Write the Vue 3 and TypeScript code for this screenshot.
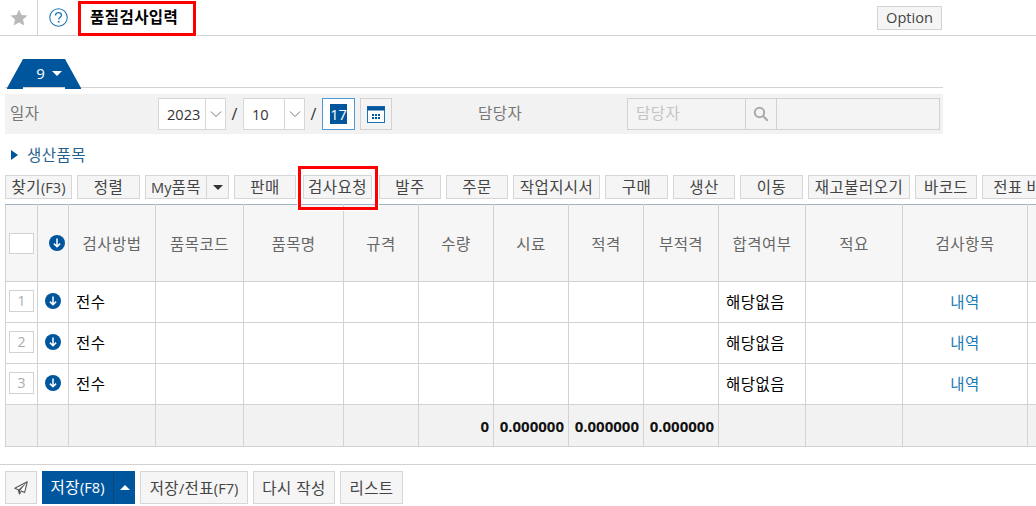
<script setup lang="ts">
interface Tool { label: string; width: number; flagged?: boolean; caret?: boolean }

const tools: Tool[] = [
  { label: '찾기(F3)', width: 67 },
  { label: '정렬', width: 63 },
  { label: 'My품목', width: 84, caret: true },
  { label: '판매', width: 62 },
  { label: '검사요청', width: 69, flagged: true },
  { label: '발주', width: 62 },
  { label: '주문', width: 62 },
  { label: '작업지시서', width: 87 },
  { label: '구매', width: 63 },
  { label: '생산', width: 62 },
  { label: '이동', width: 63 },
  { label: '재고불러오기', width: 102 },
  { label: '바코드', width: 62 },
  { label: '전표 바코드', width: 100 },
]

const columns = [
  { label: '', width: 32 },
  { label: '', width: 31 },
  { label: '검사방법', width: 87 },
  { label: '품목코드', width: 88 },
  { label: '품목명', width: 100 },
  { label: '규격', width: 75 },
  { label: '수량', width: 75 },
  { label: '시료', width: 75 },
  { label: '적격', width: 75 },
  { label: '부적격', width: 75 },
  { label: '합격여부', width: 87 },
  { label: '적요', width: 97 },
  { label: '검사항목', width: 125 },
  { label: '', width: 60 },
]

const rows = [1, 2, 3]

function runs(text: string): { text: string; latin: boolean }[] {
  return text
    .split(/([\x20-\x7e]+)/)
    .filter((part) => part.length > 0)
    .map((part) => ({ text: part, latin: /^[\x20-\x7e]+$/.test(part) }))
}
</script>

<template>
  <div class="page">
    <svg width="0" height="0" class="defs" aria-hidden="true">
      <symbol id="down" viewBox="0 0 16 16">
        <circle cx="8" cy="8" r="8" fill="#00569c" />
        <path d="M8 3.6V11.6M4.9 8.6L8 11.7L11.1 8.6" fill="none" stroke="#fff" stroke-width="1.5" />
      </symbol>
      <symbol id="chev" viewBox="0 0 12 8">
        <path d="M1 1.5L6 6.5L11 1.5" fill="none" stroke="#777" stroke-width="1" />
      </symbol>
    </svg>

    <header class="topbar">
      <div class="star-cell">
        <svg width="18" height="17" viewBox="0 0 18 17">
          <path d="M9 0.5L11.5 6L17.5 6.6L13 10.6L14.3 16.5L9 13.4L3.7 16.5L5 10.6L0.5 6.6L6.5 6Z" fill="#b9b9b9" />
        </svg>
      </div>
      <div class="help-cell">
        <svg width="19" height="19" viewBox="0 0 18 18">
          <circle cx="9" cy="9" r="8.3" fill="none" stroke="#1c75b8" stroke-width="1" />
          <path d="M6.2 7C6.2 5.3 7.4 4.4 9 4.4C10.7 4.4 11.8 5.4 11.8 6.8C11.8 8.7 9.2 8.9 9.2 11" fill="none" stroke="#1c75b8" stroke-width="1.2" />
          <rect x="8.4" y="12.2" width="1.6" height="1.6" fill="#1c75b8" />
        </svg>
      </div>
      <h1 class="title">품질검사입력</h1>
      <button class="option" type="button">Option</button>
    </header>

    <div class="tabs">
      <div class="tab"><span class="tab-num">9</span><i class="caret-down"></i></div>
    </div>

    <div class="filters">
      <span class="f-label date-label">일자</span>
      <div class="select year">
        <span class="select-val">2023</span>
        <span class="select-arrow"><svg width="12" height="8"><use href="#chev" /></svg></span>
      </div>
      <span class="slash">/</span>
      <div class="select month">
        <span class="select-val">10</span>
        <span class="select-arrow"><svg width="12" height="8"><use href="#chev" /></svg></span>
      </div>
      <span class="slash">/</span>
      <div class="day"><span class="day-sel">17</span></div>
      <button class="cal" type="button" aria-label="달력">
        <svg width="18" height="17" viewBox="0 0 18 17">
          <rect x="0.5" y="0.5" width="17" height="16" fill="#fff" stroke="#1c75b8" />
          <rect x="0.5" y="0.5" width="17" height="4" fill="#00569c" />
          <path d="M5 8h2v2H5zM8 8h2v2H8zM11 8h2v2h-2zM5 11h2v2H5zM8 11h2v2H8zM11 11h2v2h-2z" fill="#00569c" />
        </svg>
      </button>
      <span class="f-label owner-label">담당자</span>
      <div class="owner">
        <span class="owner-input">담당자</span>
        <span class="owner-search">
          <svg width="16" height="16" viewBox="0 0 16 16">
            <circle cx="6.5" cy="6.5" r="4.7" fill="none" stroke="#aaa" stroke-width="2" />
            <path d="M10 10L14.8 14.8" stroke="#aaa" stroke-width="2.2" />
          </svg>
        </span>
        <span class="owner-name"></span>
      </div>
    </div>

    <div class="section">
      <i class="tri"></i>
      <span>생산품목</span>
    </div>

    <div class="toolbar">
      <button
        v-for="t in tools"
        :key="t.label"
        class="tool"
        :class="{ flagged: t.flagged }"
        type="button"
        :style="{ width: t.width + 'px', flexBasis: t.width + 'px' }"
      >
        <span class="tool-text">
          <span v-for="(r, i) in runs(t.label)" :key="i" :class="{ lat: r.latin }">{{ r.text }}</span>
        </span>
        <span v-if="t.caret" class="tool-caret"><i class="caret-dark"></i></span>
        <span v-if="t.flagged" class="flag"></span>
      </button>
    </div>

    <table class="grid">
      <colgroup>
        <col v-for="(c, i) in columns" :key="i" :style="{ width: c.width + 'px' }" />
      </colgroup>
      <thead>
        <tr>
          <th><span class="check"></span></th>
          <th class="arrow-head"><svg width="16" height="16"><use href="#down" /></svg></th>
          <th v-for="c in columns.slice(2)" :key="c.label">{{ c.label }}</th>
        </tr>
      </thead>
      <tbody>
        <tr v-for="n in rows" :key="n">
          <td><span class="rownum">{{ n }}</span></td>
          <td class="arrow-cell"><svg width="16" height="16"><use href="#down" /></svg></td>
          <td class="left">전수</td>
          <td></td>
          <td></td>
          <td></td>
          <td></td>
          <td></td>
          <td></td>
          <td></td>
          <td class="left">해당없음</td>
          <td></td>
          <td class="link">내역</td>
          <td></td>
        </tr>
      </tbody>
      <tfoot>
        <tr>
          <td></td>
          <td></td>
          <td></td>
          <td></td>
          <td></td>
          <td></td>
          <td class="sum">0</td>
          <td class="sum">0.000000</td>
          <td class="sum">0.000000</td>
          <td class="sum">0.000000</td>
          <td></td>
          <td></td>
          <td></td>
          <td></td>
        </tr>
      </tfoot>
    </table>

    <footer class="actions">
      <button class="act send" type="button" aria-label="보내기">
        <svg width="14" height="14" viewBox="0 0 14 14">
          <path d="M13.3 0.7L0.8 7.2L4.3 8.7L5.4 12.9L7.4 10L10.6 11.6Z" fill="#fff" stroke="#555" stroke-width="1.1" stroke-linejoin="round" />
          <path d="M13.3 0.7L4.3 8.7L5.4 12.9L6.2 9.4Z" fill="#555" />
        </svg>
      </button>
      <div class="save">
        <span class="save-main">저장<span class="lat">(F8)</span></span>
        <span class="save-caret"><i class="caret-up"></i></span>
      </div>
      <button class="act w-108" type="button">저장<span class="lat">/</span>전표<span class="lat">(F7)</span></button>
      <button class="act w-82" type="button">다시 작성</button>
      <button class="act w-63" type="button">리스트</button>
    </footer>
  </div>
</template>

<style>
html,
body {
  margin: 0;
  overflow: hidden;
  background: #fff;
}
</style>

<style scoped>
.page {
  width: 1036px;
  height: 506px;
  overflow: hidden;
  font-family: "Open Sans", "Noto Sans CJK KR", sans-serif;
  font-size: 15.5px;
  letter-spacing: 0.45px;
  color: #444;
  background: #fff;
}
.defs {
  position: absolute;
}
.lat {
  font-size: 14.6px;
  letter-spacing: 0;
}
button {
  font: inherit;
  letter-spacing: inherit;
  color: inherit;
  padding: 0;
  margin: 0;
}

.topbar {
  display: flex;
  align-items: stretch;
  height: 35px;
  border-bottom: 1px solid #d2d2d2;
}
.star-cell {
  width: 37px;
  border-right: 1px solid #d2d2d2;
  display: flex;
  align-items: center;
  justify-content: center;
}
.help-cell {
  width: 40px;
  display: flex;
  align-items: center;
  justify-content: center;
}
.title {
  box-sizing: border-box;
  width: 118px;
  height: 35px;
  margin: 1px 0 0;
  border: 3px solid #f00;
  box-shadow: 0 0 0 1px #fff;
  background: #fff;
  position: relative;
  padding-left: 9px;
  font-size: 15.5px;
  font-weight: 700;
  line-height: 27px;
  color: #000;
  white-space: nowrap;
}
.option {
  box-sizing: border-box;
  margin: 6px 94px 0 auto;
  width: 65px;
  height: 24px;
  padding-bottom: 2px;
  border: 1px solid #d2d2d2;
  background: #f5f5f5;
  font-size: 14.6px;
  line-height: 20px;
  letter-spacing: 0;
  color: #444;
}

.tabs {
  margin: 0 93px 0 5px;
  padding-top: 23px;
  height: 28px;
  border-bottom: 1px solid #d2d2d2;
}
.tab {
  position: relative;
  margin-left: 2px;
  width: 74px;
  height: 30px;
  background: #00569c;
  clip-path: polygon(16px 0, 58px 0, 74px 29px, 74px 30px, 58px 30px, 58px 28px, 16px 28px, 16px 30px, 0 30px, 0 29px);
  display: flex;
  align-items: center;
  justify-content: center;
  gap: 7px;
  color: #fff;
  font-size: 15px;
  letter-spacing: 0;
  padding: 0 0 2px 10px;
  box-sizing: border-box;
}
.caret-down {
  width: 0;
  height: 0;
  border: 5px solid transparent;
  border-top: 5px solid #fff;
  border-bottom: 0;
}

.filters {
  box-sizing: border-box;
  display: flex;
  align-items: center;
  height: 40px;
  margin: 6px 93px 0 5px;
  background: #f2f2f2;
}
.f-label {
  color: #777;
  padding-bottom: 3px;
}
.date-label {
  width: 148px;
  padding-left: 5px;
}
.select {
  box-sizing: border-box;
  display: flex;
  height: 32px;
  border: 1px solid #d6d6d6;
  background: #fff;
  font-size: 14.6px;
  letter-spacing: 0;
  color: #333;
}
.year {
  width: 68px;
}
.month {
  width: 62px;
}
.select-val {
  flex: 1;
  line-height: 30px;
  padding-left: 8px;
}
.select-arrow {
  width: 19px;
  border-left: 1px solid #d6d6d6;
  display: flex;
  align-items: center;
  justify-content: center;
}
.slash {
  width: 17px;
  text-align: center;
  font-size: 16px;
  letter-spacing: 0;
  color: #333;
}
.day {
  box-sizing: border-box;
  width: 33px;
  height: 32px;
  border: 1px solid #4a9bd8;
  background: #fff;
  display: flex;
  align-items: center;
  justify-content: center;
}
.day-sel {
  background: #00569c;
  color: #fff;
  font-size: 14.6px;
  letter-spacing: 0;
  line-height: 20px;
  width: 17px;
  text-align: center;
}
.cal {
  box-sizing: border-box;
  width: 32px;
  height: 32px;
  margin-left: 5px;
  border: 1px solid #d2d2d2;
  background: #f4f4f4;
  display: flex;
  align-items: center;
  justify-content: center;
}
.owner-label {
  margin-left: 86px;
  width: 149px;
}
.owner {
  box-sizing: border-box;
  display: flex;
  width: 313px;
  height: 32px;
  border: 1px solid #d2d2d2;
  background: #f4f4f4;
}
.owner-input {
  width: 117px;
  line-height: 29px;
  padding-left: 8px;
  box-sizing: border-box;
  color: #c4c4c4;
}
.owner-search {
  box-sizing: border-box;
  width: 32px;
  border-left: 1px solid #d2d2d2;
  border-right: 1px solid #d2d2d2;
  display: flex;
  align-items: center;
  justify-content: center;
}
.owner-name {
  flex: 1;
}

.section {
  box-sizing: border-box;
  display: flex;
  align-items: center;
  height: 22px;
  margin-top: 10px;
  padding: 0 0 2px 11px;
  color: #25628f;
}
.tri {
  width: 0;
  height: 0;
  border-left: 7px solid #00569c;
  border-top: 5px solid transparent;
  border-bottom: 5px solid transparent;
  margin: 1px 9px 0 0;
}

.toolbar {
  display: flex;
  gap: 5px;
  margin: 9px 0 0 5px;
  height: 24px;
}
.tool {
  position: relative;
  box-sizing: border-box;
  flex-shrink: 0;
  flex-grow: 0;
  display: flex;
  height: 24px;
  border: 1px solid #d6d6d6;
  background: #f5f5f5;
  color: #444;
  white-space: nowrap;
}
.tool.flagged {
  margin: 0 2px;
}
.tool-text {
  flex: 1;
  line-height: 22px;
  text-align: center;
}
.tool-caret {
  width: 21px;
  border-left: 1px solid #d6d6d6;
  display: flex;
  align-items: center;
  justify-content: center;
}
.caret-dark {
  width: 0;
  height: 0;
  border: 5px solid transparent;
  border-top: 5px solid #333;
  border-bottom: 0;
}
.flag {
  position: absolute;
  left: -6px;
  right: -7px;
  top: -10px;
  bottom: -12px;
  border: 3px solid #f00;
  box-shadow: 0 0 0 1px #fff;
  z-index: 2;
}

.grid {
  table-layout: fixed;
  border-collapse: collapse;
  width: 1082px;
  margin: 5px 0 0 5px;
}
.grid th,
.grid td {
  border: 1px solid #d2d2d2;
  padding: 0;
  overflow: hidden;
  white-space: nowrap;
}
.grid th {
  height: 76px;
  background: #f6f6f6;
  border-top: 1px solid #9db2c6;
  font-weight: 400;
  text-align: center;
  color: #666;
  vertical-align: middle;
}
.grid tbody td {
  height: 38px;
  padding-bottom: 2px;
  color: #000;
}
.check {
  display: block;
  box-sizing: border-box;
  width: 25px;
  height: 21px;
  margin-left: 3px;
  border: 1px solid #d2d2d2;
  background: #fff;
}
.rownum {
  display: block;
  box-sizing: border-box;
  width: 25px;
  height: 22px;
  margin-left: 3px;
  border: 1px solid #d2d2d2;
  text-align: center;
  font-size: 14px;
  letter-spacing: 0;
  line-height: 20px;
  color: #aaa;
}
.arrow-head svg {
  display: block;
  margin-left: 11px;
}
.arrow-cell svg {
  display: block;
  margin-left: 7px;
}
.grid td.left {
  padding-left: 7px;
}
.grid td.link {
  text-align: center;
  color: #1a7ab5;
}
.grid tfoot td {
  height: 41px;
  background: #f2f2f2;
}
.grid td.sum {
  text-align: right;
  padding-right: 4px;
  font-size: 15px;
  font-weight: 700;
  letter-spacing: 0;
  color: #111;
}

.actions {
  display: flex;
  gap: 5px;
  margin-top: 17px;
  padding: 6px 0 0 5px;
  border-top: 1px solid #d2d2d2;
}
.act {
  box-sizing: border-box;
  height: 33px;
  border: 1px solid #d6d6d6;
  background: #f5f5f5;
  color: #444;
  white-space: nowrap;
}
.send {
  width: 32px;
  display: flex;
  align-items: center;
  justify-content: center;
}
.w-108 {
  width: 108px;
}
.w-82 {
  width: 82px;
}
.w-63 {
  width: 63px;
}
.save {
  display: flex;
  width: 93px;
  height: 33px;
  background: #00569c;
  color: #fff;
}
.save-main {
  width: 71px;
  text-align: center;
  line-height: 32px;
}
.save-caret {
  flex: 1;
  border-left: 1px solid #0a4679;
  display: flex;
  align-items: center;
  justify-content: center;
}
.caret-up {
  width: 0;
  height: 0;
  border: 5px solid transparent;
  border-bottom: 5px solid #fff;
  border-top: 0;
}
</style>
